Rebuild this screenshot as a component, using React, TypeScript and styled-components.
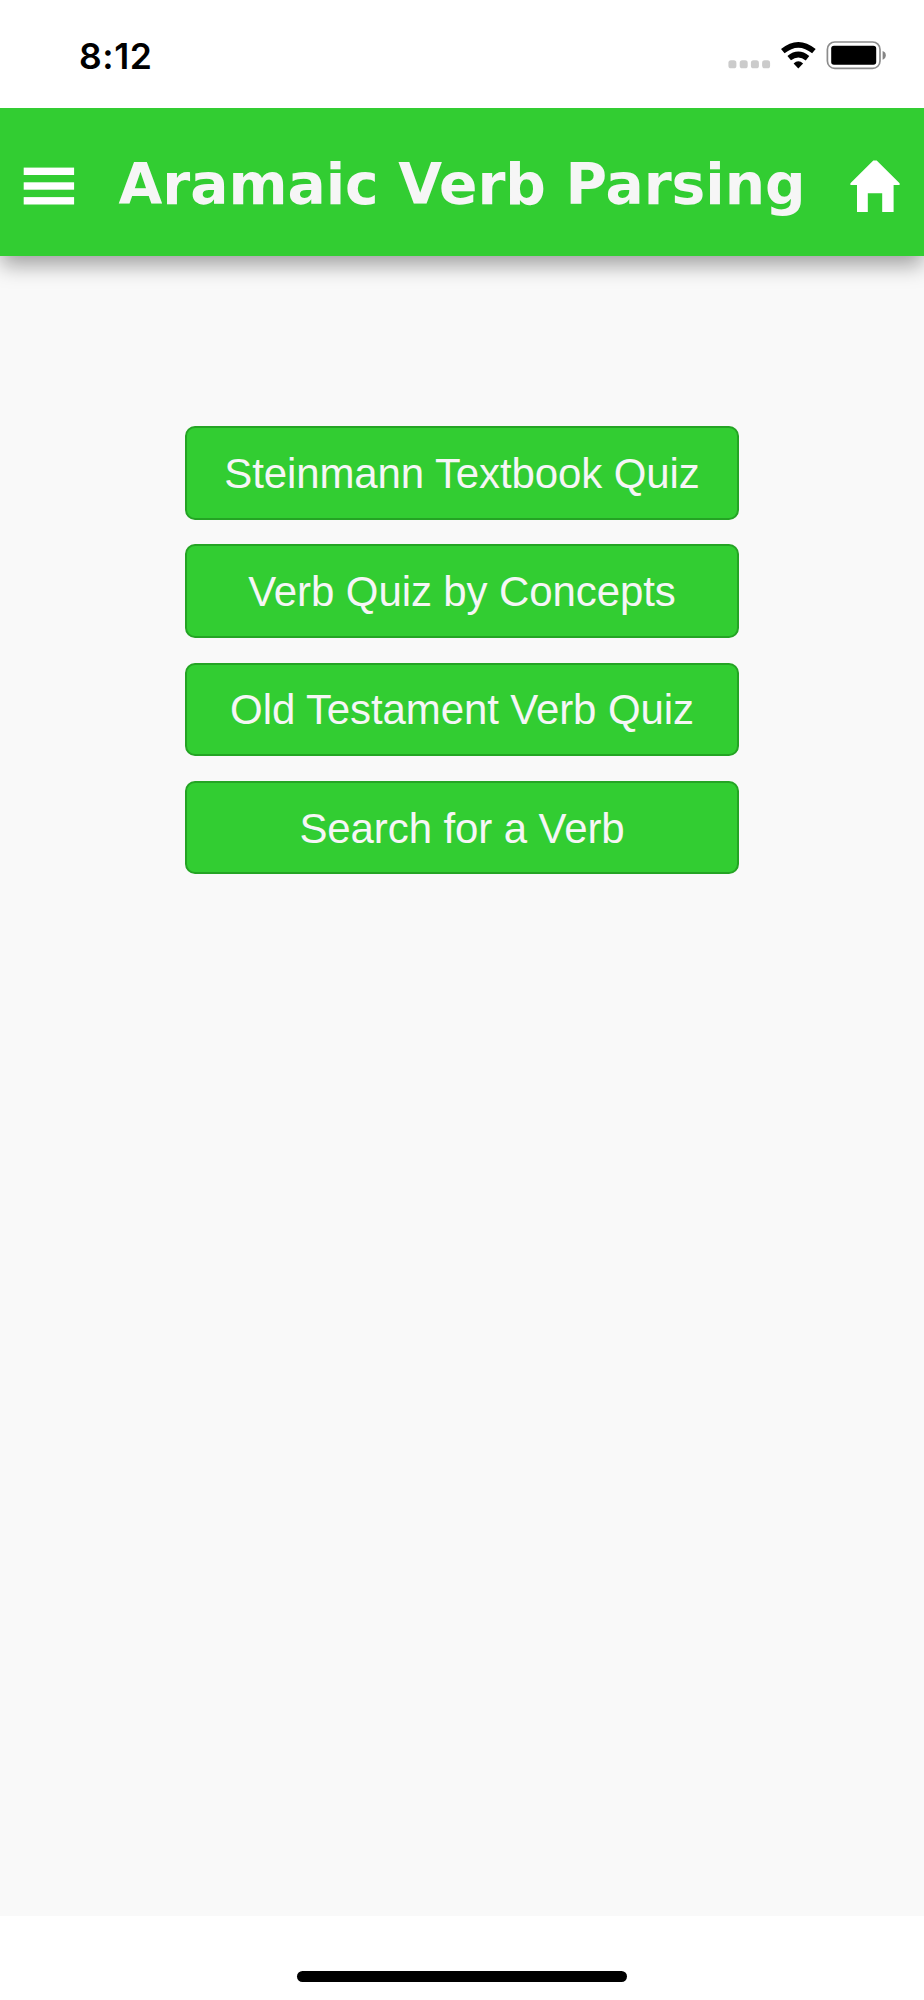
import React from "react";
import styled, { createGlobalStyle } from "styled-components";

const GlobalStyle = createGlobalStyle`
  * { box-sizing: border-box; }
  body { margin: 0; background: #fff; }
`;

const Screen = styled.div`
  display: flex;
  flex-direction: column;
  width: 924px;
  height: 2000px;
  overflow: hidden;
  background: #fff;
`;

const StatusBar = styled.div`
  display: flex;
  justify-content: space-between;
  align-items: flex-start;
  flex: none;
  height: 108px;
  padding: 36px 37px 0 79px;
`;

const Time = styled.span`
  padding-top: 1px;
  font: 580 35.5px/40px Inter, sans-serif;
  letter-spacing: 0.6px;
  color: #000;
`;

const StatusIcons = styled.svg`
  display: block;
  width: 160px;
  height: 40px;
`;

const Header = styled.header`
  display: flex;
  align-items: center;
  justify-content: space-between;
  flex: none;
  height: 148px;
  padding: 8px 23px 0;
  background: #32cd32;
  box-shadow: 0 10px 20px -1px rgba(0, 0, 0, 0.36);
  clip-path: inset(0 0 -60px 0);
  z-index: 1;
`;

const IconButton = styled.button`
  display: flex;
  padding: 0;
  border: 0;
  background: none;
  svg { display: block; }
`;

const Title = styled.h1`
  margin: 0;
  padding-bottom: 4px;
  font: 700 56.7px/72px "DejaVu Sans", sans-serif;
  letter-spacing: -0.05px;
  white-space: nowrap;
  color: #f6f6f6;
`;

const Content = styled.main`
  display: flex;
  flex-direction: column;
  align-items: center;
  gap: 24.6px;
  flex: none;
  height: 1660px;
  padding-top: 170.3px;
  background: #f9f9f9;
`;

const MenuButton = styled.button`
  flex: none;
  width: 554px;
  height: 93.6px;
  padding: 2px 0 0;
  border: 2px solid #24a424;
  border-radius: 10px;
  background: #32cd32;
  font: 400 42px/48px "Liberation Sans", Arial, sans-serif;
  letter-spacing: -0.1px;
  color: #f6f6f6;
`;

const HomeArea = styled.footer`
  display: flex;
  justify-content: center;
  flex: 1;
  padding-top: 55px;
`;

const HomeIndicator = styled.div`
  width: 330px;
  height: 11px;
  border-radius: 6px;
  background: #000;
`;

const entries = [
  "Steinmann Textbook Quiz",
  "Verb Quiz by Concepts",
  "Old Testament Verb Quiz",
  "Search for a Verb",
];

export default function App() {
  return (
    <Screen>
      <GlobalStyle />
      <StatusBar>
        <Time>8:12</Time>
        <StatusIcons viewBox="727 36 160 40">
          {[728.4, 739.7, 750.9, 762.1].map((x) => (
            <rect key={x} x={x} y="60.3" width="8" height="8" rx="2.6" fill="#cbcbcb" />
          ))}
          <g fill="none" stroke="#000" strokeWidth="5.6">
            <path d="M782.8 51.2Q798.3 38.4 813.9 51.2" />
            <path d="M789.2 58.2Q798.3 50.8 807.5 58.2" />
          </g>
          <path d="M793.6 63.4Q798.3 59.2 803.1 63.4L798.3 68.4Z" />
          <rect x="827.4" y="42" width="52.6" height="26.4" rx="7.4" fill="none" stroke="#8c8c8c" strokeWidth="1.7" />
          <rect x="831.2" y="45.7" width="45" height="19.1" rx="2.8" />
          <path d="M882.6 51Q885.8 52 885.8 55.3T882.6 59.7Z" fill="#858585" />
        </StatusIcons>
      </StatusBar>
      <Header>
        <IconButton aria-label="Menu">
          <svg width="52" height="52" viewBox="23 160 52 52" fill="#fff">
            <rect x="23.7" y="167.6" width="50.4" height="7.4" />
            <rect x="23.7" y="182.3" width="50.4" height="7.4" />
            <rect x="23.7" y="197.1" width="50.4" height="7.4" />
          </svg>
        </IconButton>
        <Title>Aramaic Verb Parsing</Title>
        <IconButton aria-label="Home">
          <svg width="52" height="52" viewBox="849 160 52 52" fill="#fff">
            <path d="M873.3 160.5h3.4L899.6 183.2v1.9H893.6V212h-11.4v-18.8h-14.4V212H857V185.1H850.4v-1.9Z" />
          </svg>
        </IconButton>
      </Header>
      <Content>
        {entries.map((label) => (
          <MenuButton key={label}>{label}</MenuButton>
        ))}
      </Content>
      <HomeArea>
        <HomeIndicator />
      </HomeArea>
    </Screen>
  );
}
